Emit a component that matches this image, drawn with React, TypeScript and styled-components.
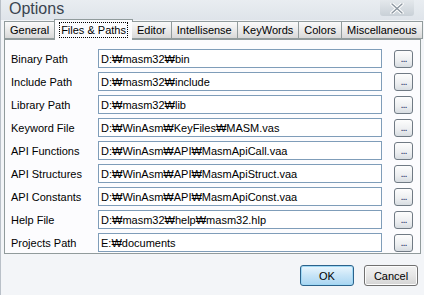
import React, { useState } from "react";
import styled, { createGlobalStyle } from "styled-components";

const GlobalStyle = createGlobalStyle`
  html, body {
    margin: 0;
    padding: 0;
    background: #eef1f5;
  }
  body {
    font-family: "Liberation Sans", Arial, sans-serif;
    font-size: 11px;
    color: #000;
  }
`;

const TABS = [
  "General",
  "Files & Paths",
  "Editor",
  "Intellisense",
  "KeyWords",
  "Colors",
  "Miscellaneous",
];

const PATHS = [
  { label: "Binary Path", value: "D:₩masm32₩bin" },
  { label: "Include Path", value: "D:₩masm32₩include" },
  { label: "Library Path", value: "D:₩masm32₩lib" },
  { label: "Keyword File", value: "D:₩WinAsm₩KeyFiles₩MASM.vas" },
  { label: "API Functions", value: "D:₩WinAsm₩API₩MasmApiCall.vaa" },
  { label: "API Structures", value: "D:₩WinAsm₩API₩MasmApiStruct.vaa" },
  { label: "API Constants", value: "D:₩WinAsm₩API₩MasmApiConst.vaa" },
  { label: "Help File", value: "D:₩masm32₩help₩masm32.hlp" },
  { label: "Projects Path", value: "E:₩documents" },
];

const App = () => {
  const [active, setActive] = useState(1);

  return (
    <Dialog>
      <GlobalStyle />
      <TitleBar>
        <Title>Options</Title>
        <CloseButton>
          <svg width="16" height="11" viewBox="0 0 16 11">
            <path
              d="M3 1 L13 10 M13 1 L3 10"
              stroke="#fff"
              strokeWidth="3.4"
              strokeLinecap="round"
            />
            <path
              d="M3 1 L13 10 M13 1 L3 10"
              stroke="#8c96a0"
              strokeWidth="1.4"
              strokeLinecap="round"
            />
          </svg>
        </CloseButton>
      </TitleBar>

      <TabBar>
        {TABS.map((t, i) => (
          <Tab key={t} selected={i === active} onClick={() => setActive(i)}>
            <TabLabel selected={i === active}>{t}</TabLabel>
          </Tab>
        ))}
      </TabBar>

      <Panel>
        {PATHS.map((p) => (
          <Row key={p.label}>
            <Label>{p.label}</Label>
            <PathInput defaultValue={p.value} />
            <BrowseButton>...</BrowseButton>
          </Row>
        ))}
      </Panel>

      <Footer>
        <DialogButton primary>OK</DialogButton>
        <DialogButton>Cancel</DialogButton>
      </Footer>
    </Dialog>
  );
};

export default App;

const Dialog = styled.div`
  width: 424px;
  height: 295px;
  box-sizing: border-box;
  display: flex;
  flex-direction: column;
  background: #f3f5f8;
  border-left: 1px solid #b9c0c8;
  overflow: hidden;
`;

const TitleBar = styled.div`
  height: 20px;
  display: flex;
  align-items: flex-start;
  justify-content: space-between;
  background: linear-gradient(#e9edf1, #dfe4ea);
`;

const Title = styled.div`
  font-size: 16px;
  line-height: 18px;
  color: #3a4450;
  padding-left: 8px;
`;

const CloseButton = styled.div`
  width: 34px;
  height: 16px;
  margin-right: 10px;
  display: flex;
  align-items: center;
  justify-content: center;
  background: linear-gradient(#e4e8ec, #c9d0d7);
  border-radius: 0 0 3px 3px;
`;

const TabBar = styled.div`
  display: flex;
  align-items: flex-end;
  height: 19px;
  padding-left: 3px;
  position: relative;
  z-index: 1;
`;

const Tab = styled.div<{ selected?: boolean }>`
  height: ${({ selected }) => (selected ? "21px" : "18px")};
  margin: ${({ selected }) => (selected ? "0 -1px -1px" : "0")};
  padding: 0 ${({ selected }) => (selected ? "4px" : "3px")};
  box-sizing: border-box;
  display: flex;
  align-items: center;
  white-space: nowrap;
  flex: none;
  border: 1px solid #919b9c;
  border-bottom: ${({ selected }) => (selected ? "none" : "1px solid #919b9c")};
  border-left: ${({ selected }) => (selected ? "1px solid #919b9c" : "none")};
  background: ${({ selected }) =>
    selected ? "#fcfcfe" : "linear-gradient(#fafafa, #e4e4e4 70%, #d8d8d8)"};
  color: #000;
  cursor: default;
  &:first-child {
    border-left: 1px solid #919b9c;
  }
`;

const TabLabel = styled.span<{ selected?: boolean }>`
  padding: 0 1px;
  line-height: 14px;
  border: 1px dotted ${({ selected }) => (selected ? "#000" : "transparent")};
`;

const Panel = styled.div`
  margin: 0 3px 0 3px;
  height: 215px;
  box-sizing: border-box;
  border: 1px solid #919b9c;
  background: #fcfcfe;
  padding: 9px 0 0 6px;
  display: flex;
  flex-direction: column;
  gap: 4px;
`;

const Row = styled.div`
  display: flex;
  align-items: center;
  height: 19px;
`;

const Label = styled.div`
  width: 87px;
  flex: none;
`;

const PathInput = styled.input`
  width: 284px;
  height: 19px;
  box-sizing: border-box;
  border: 1px solid #7f9db9;
  background: #fff;
  padding: 0 2px;
  font-family: "Liberation Sans", Arial, sans-serif;
  font-size: 11px;
  color: #000;
  outline: none;
`;

const BrowseButton = styled.div`
  width: 19px;
  height: 18px;
  margin-left: 12px;
  box-sizing: border-box;
  border: 1px solid #707a84;
  border-radius: 3px;
  background: linear-gradient(#fdfdfd, #eceef0 60%, #d8dde2);
  color: #2a3a6a;
  font-size: 11px;
  line-height: 14px;
  text-align: center;
  letter-spacing: -1px;
`;

const Footer = styled.div`
  flex: 1;
  display: flex;
  justify-content: flex-end;
  align-items: flex-start;
  gap: 10px;
  padding: 11px 6px 0 0;
`;

const DialogButton = styled.div<{ primary?: boolean }>`
  width: 54px;
  height: 21px;
  box-sizing: border-box;
  display: flex;
  align-items: center;
  justify-content: center;
  border: 1px solid ${({ primary }) => (primary ? "#2c628b" : "#707070")};
  border-radius: 3px;
  background: ${({ primary }) =>
    primary
      ? "linear-gradient(#eaf6fd, #c7e4f7 50%, #a9d6f2)"
      : "linear-gradient(#f2f2f2, #e6e6e6 50%, #d4d4d4)"};
  box-shadow: inset 0 0 0 1px ${({ primary }) => (primary ? "#9fd8f5" : "#fcfcfc")};
  color: #000;
`;
